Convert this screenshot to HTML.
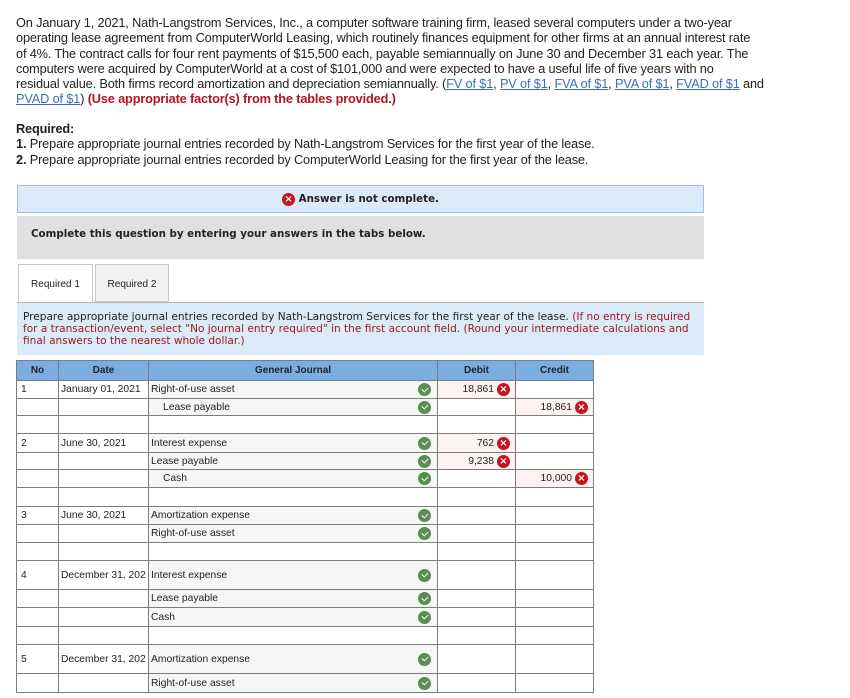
<!DOCTYPE html>
<html><head><meta charset="utf-8"><style>
*{margin:0;padding:0;box-sizing:border-box}
body{width:850px;height:698px;background:#fff;font-family:"Liberation Sans",sans-serif;position:relative;overflow:hidden;color:#222}
.intro{position:absolute;left:16px;top:15px;width:840px;white-space:nowrap;font-size:12.75px;line-height:15.3px;letter-spacing:-0.15px}
.intro a{color:#3a6fb8;text-decoration:underline}
.red{color:#b0161b;font-weight:bold}
.req{position:absolute;left:16px;top:121px;font-size:12.75px;line-height:15.3px;letter-spacing:-0.15px}
.banner{position:absolute;left:17px;top:185px;width:687px;height:28px;background:#dbeaf8;border:1px solid #9dbfe3;font-family:"DejaVu Sans",sans-serif;font-weight:bold;font-size:10.3px;text-align:center;line-height:27px}
.gray{position:absolute;left:17px;top:216px;width:687px;height:43px;background:#e0e0e0;font-family:"DejaVu Sans",sans-serif;font-weight:bold;font-size:10.3px;padding-left:14px;line-height:36px}
.tab{position:absolute;top:264px;height:38px;font-size:10px;line-height:40px;text-align:center;border:1px solid #c8c8c8}
.line{position:absolute;left:17px;top:302px;width:687px;height:1px;background:#b8b8b8}
.instr{position:absolute;left:17px;top:303px;width:687px;height:52px;background:#dbeaf8;font-family:"DejaVu Sans",sans-serif;font-size:10.55px;line-height:12px;padding:8px 6px;white-space:nowrap;overflow:hidden}
.instr span{color:#a01a1a}
table{position:absolute;left:16px;top:360px;border-collapse:collapse;font-size:10.3px}
td,th{border:1px solid #7c7c7c;padding:0 4px;vertical-align:middle;white-space:nowrap;overflow:hidden}
th{background:#7aaee3;font-weight:bold;height:20px;font-size:10px}
.gj{background:#f4f7f4;position:relative}
.db{background:#fdf1f1;text-align:right;position:relative;padding-right:21px}
.ind{padding-left:14px}
.ck{position:absolute;right:6px;top:50%;margin-top:-6.5px;width:13px;height:13px;border-radius:50%;background:#5a8d52}
.ck:after{content:"";position:absolute;left:3.5px;top:3.5px;width:5px;height:3px;border-left:1.6px solid #fff;border-bottom:1.6px solid #fff;transform:rotate(-45deg)}
.x{display:inline-block;width:13px;height:13px;border-radius:50%;background:#c4161c;color:#fff;font-size:10px;font-weight:bold;line-height:13px;text-align:center;font-family:"DejaVu Sans",sans-serif;vertical-align:middle}
.db .x{position:absolute;right:5px;top:50%;margin-top:-6.5px}
</style></head><body>
<div class="intro">On January 1, 2021, Nath-Langstrom Services, Inc., a computer software training firm, leased several computers under a two-year<br>operating lease agreement from ComputerWorld Leasing, which routinely finances equipment for other firms at an annual interest rate<br>of 4%. The contract calls for four rent payments of $15,500 each, payable semiannually on June 30 and December 31 each year. The<br>computers were acquired by ComputerWorld at a cost of $101,000 and were expected to have a useful life of five years with no<br>residual value. Both firms record amortization and depreciation semiannually. (<a>FV of $1</a>, <a>PV of $1</a>, <a>FVA of $1</a>, <a>PVA of $1</a>, <a>FVAD of $1</a> and<br><a>PVAD of $1</a>) <span class="red">(Use appropriate factor(s) from the tables provided.)</span></div>
<div class="req"><b>Required:</b><br><b>1.</b> Prepare appropriate journal entries recorded by Nath-Langstrom Services for the first year of the lease.<br><b>2.</b> Prepare appropriate journal entries recorded by ComputerWorld Leasing for the first year of the lease.</div>
<div class="banner"><span class="x">×</span> Answer is not complete.</div>
<div class="gray">Complete this question by entering your answers in the tabs below.</div>
<div class="tab" style="left:18px;width:75px;background:#fff;border-bottom:none;height:39px">Required 1</div>
<div class="tab" style="left:95px;width:74px;background:#f2f2f2">Required 2</div>
<div class="line"></div>
<div class="instr">Prepare appropriate journal entries recorded by Nath-Langstrom Services for the first year of the lease. <span>(If no entry is required<br>for a transaction/event, select "No journal entry required" in the first account field. (Round your intermediate calculations and<br>final answers to the nearest whole dollar.)</span></div>
<table>
<colgroup><col style="width:42px"><col style="width:90px"><col style="width:289px"><col style="width:78px"><col style="width:78px"></colgroup>
<tr><th>No</th><th>Date</th><th>General Journal</th><th>Debit</th><th>Credit</th></tr>
<tr style="height:18px"><td>1</td><td style="padding-left:2px">January 01, 2021</td><td class="gj" style="padding-left:2px">Right-of-use asset<i class="ck"></i></td><td class="db">18,861<span class="x">×</span></td><td></td></tr>
<tr style="height:17px"><td></td><td></td><td class="gj ind">Lease payable<i class="ck"></i></td><td></td><td class="db">18,861<span class="x">×</span></td></tr>
<tr style="height:18px"><td></td><td></td><td></td><td></td><td></td></tr>
<tr style="height:19px"><td>2</td><td style="padding-left:2px">June 30, 2021</td><td class="gj" style="padding-left:2px">Interest expense<i class="ck"></i></td><td class="db">762<span class="x">×</span></td><td></td></tr>
<tr style="height:17px"><td></td><td></td><td class="gj" style="padding-left:2px">Lease payable<i class="ck"></i></td><td class="db">9,238<span class="x">×</span></td><td></td></tr>
<tr style="height:18px"><td></td><td></td><td class="gj ind">Cash<i class="ck"></i></td><td></td><td class="db">10,000<span class="x">×</span></td></tr>
<tr style="height:19px"><td></td><td></td><td></td><td></td><td></td></tr>
<tr style="height:18px"><td>3</td><td style="padding-left:2px">June 30, 2021</td><td class="gj" style="padding-left:2px">Amortization expense<i class="ck"></i></td><td></td><td></td></tr>
<tr style="height:18px"><td></td><td></td><td class="gj" style="padding-left:2px">Right-of-use asset<i class="ck"></i></td><td></td><td></td></tr>
<tr style="height:18px"><td></td><td></td><td></td><td></td><td></td></tr>
<tr style="height:29px"><td>4</td><td style="padding-left:2px;padding-right:0">December 31, 202</td><td class="gj" style="padding-left:2px">Interest expense<i class="ck"></i></td><td></td><td></td></tr>
<tr style="height:18px"><td></td><td></td><td class="gj" style="padding-left:2px">Lease payable<i class="ck"></i></td><td></td><td></td></tr>
<tr style="height:19px"><td></td><td></td><td class="gj" style="padding-left:2px">Cash<i class="ck"></i></td><td></td><td></td></tr>
<tr style="height:18px"><td></td><td></td><td></td><td></td><td></td></tr>
<tr style="height:29px"><td>5</td><td style="padding-left:2px;padding-right:0">December 31, 202</td><td class="gj" style="padding-left:2px">Amortization expense<i class="ck"></i></td><td></td><td></td></tr>
<tr style="height:19px"><td></td><td></td><td class="gj" style="padding-left:2px">Right-of-use asset<i class="ck"></i></td><td></td><td></td></tr>
</table>
</body></html>
